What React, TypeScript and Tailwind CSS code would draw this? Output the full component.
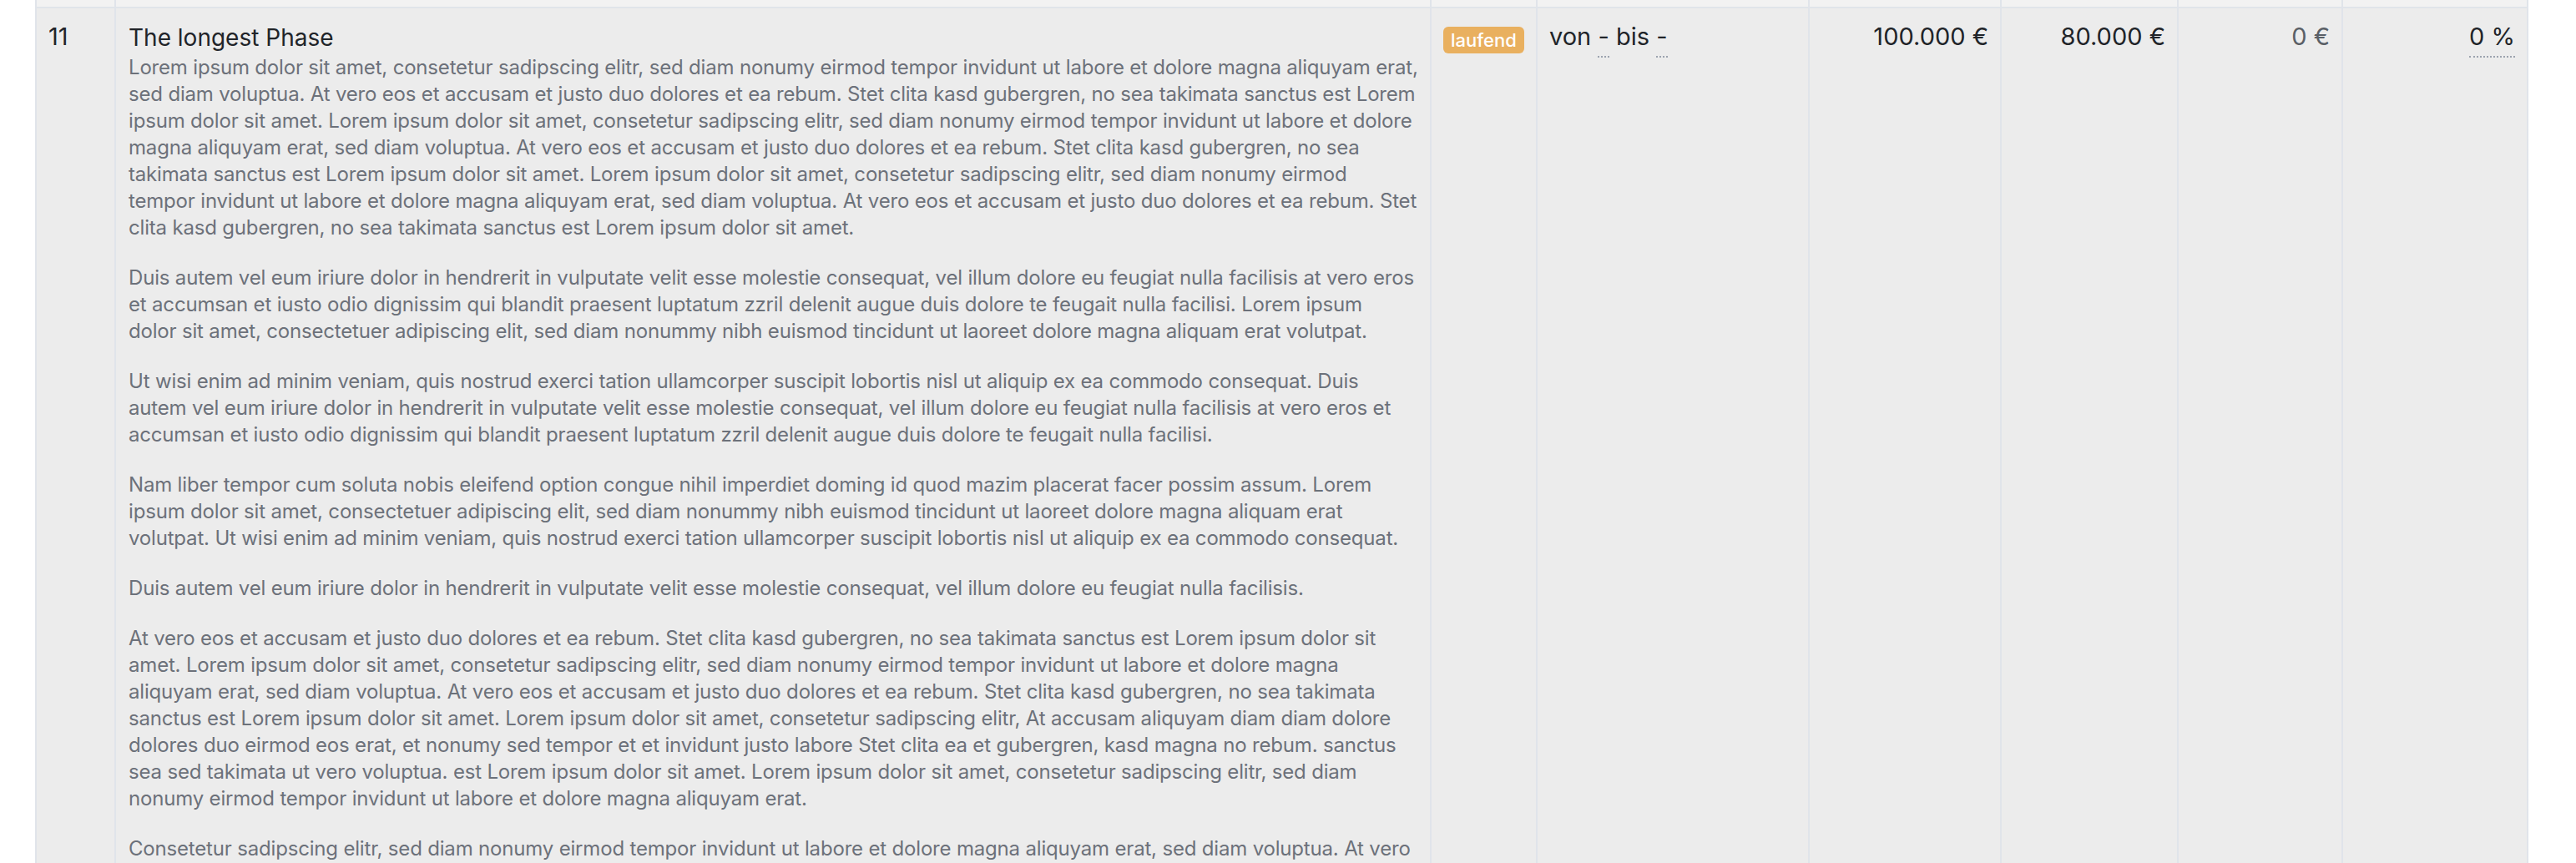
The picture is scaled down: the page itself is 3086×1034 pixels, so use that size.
import React from "react";

const paragraphs: string[][] = [
  [
    "Lorem ipsum dolor sit amet, consetetur sadipscing elitr, sed diam nonumy eirmod tempor invidunt ut labore et dolore magna aliquyam erat,",
    "sed diam voluptua. At vero eos et accusam et justo duo dolores et ea rebum. Stet clita kasd gubergren, no sea takimata sanctus est Lorem",
    "ipsum dolor sit amet. Lorem ipsum dolor sit amet, consetetur sadipscing elitr, sed diam nonumy eirmod tempor invidunt ut labore et dolore",
    "magna aliquyam erat, sed diam voluptua. At vero eos et accusam et justo duo dolores et ea rebum. Stet clita kasd gubergren, no sea",
    "takimata sanctus est Lorem ipsum dolor sit amet. Lorem ipsum dolor sit amet, consetetur sadipscing elitr, sed diam nonumy eirmod",
    "tempor invidunt ut labore et dolore magna aliquyam erat, sed diam voluptua. At vero eos et accusam et justo duo dolores et ea rebum. Stet",
    "clita kasd gubergren, no sea takimata sanctus est Lorem ipsum dolor sit amet.",
  ],
  [
    "Duis autem vel eum iriure dolor in hendrerit in vulputate velit esse molestie consequat, vel illum dolore eu feugiat nulla facilisis at vero eros",
    "et accumsan et iusto odio dignissim qui blandit praesent luptatum zzril delenit augue duis dolore te feugait nulla facilisi. Lorem ipsum",
    "dolor sit amet, consectetuer adipiscing elit, sed diam nonummy nibh euismod tincidunt ut laoreet dolore magna aliquam erat volutpat.",
  ],
  [
    "Ut wisi enim ad minim veniam, quis nostrud exerci tation ullamcorper suscipit lobortis nisl ut aliquip ex ea commodo consequat. Duis",
    "autem vel eum iriure dolor in hendrerit in vulputate velit esse molestie consequat, vel illum dolore eu feugiat nulla facilisis at vero eros et",
    "accumsan et iusto odio dignissim qui blandit praesent luptatum zzril delenit augue duis dolore te feugait nulla facilisi.",
  ],
  [
    "Nam liber tempor cum soluta nobis eleifend option congue nihil imperdiet doming id quod mazim placerat facer possim assum. Lorem",
    "ipsum dolor sit amet, consectetuer adipiscing elit, sed diam nonummy nibh euismod tincidunt ut laoreet dolore magna aliquam erat",
    "volutpat. Ut wisi enim ad minim veniam, quis nostrud exerci tation ullamcorper suscipit lobortis nisl ut aliquip ex ea commodo consequat.",
  ],
  [
    "Duis autem vel eum iriure dolor in hendrerit in vulputate velit esse molestie consequat, vel illum dolore eu feugiat nulla facilisis.",
  ],
  [
    "At vero eos et accusam et justo duo dolores et ea rebum. Stet clita kasd gubergren, no sea takimata sanctus est Lorem ipsum dolor sit",
    "amet. Lorem ipsum dolor sit amet, consetetur sadipscing elitr, sed diam nonumy eirmod tempor invidunt ut labore et dolore magna",
    "aliquyam erat, sed diam voluptua. At vero eos et accusam et justo duo dolores et ea rebum. Stet clita kasd gubergren, no sea takimata",
    "sanctus est Lorem ipsum dolor sit amet. Lorem ipsum dolor sit amet, consetetur sadipscing elitr, At accusam aliquyam diam diam dolore",
    "dolores duo eirmod eos erat, et nonumy sed tempor et et invidunt justo labore Stet clita ea et gubergren, kasd magna no rebum. sanctus",
    "sea sed takimata ut vero voluptua. est Lorem ipsum dolor sit amet. Lorem ipsum dolor sit amet, consetetur sadipscing elitr, sed diam",
    "nonumy eirmod tempor invidunt ut labore et dolore magna aliquyam erat.",
  ],
  [
    "Consetetur sadipscing elitr, sed diam nonumy eirmod tempor invidunt ut labore et dolore magna aliquyam erat, sed diam voluptua. At vero",
    "eos et accusam et justo duo dolores et ea rebum. Stet clita kasd gubergren, no sea takimata sanctus est Lorem ipsum dolor sit amet.",
  ],
];

const cols =
  "grid grid-cols-[95px_1576px_127px_326px_230px_212px_197px_222px] border-r-2 border-[#e0e4ea]";

export default function App() {
  return (
    <div className="w-[3086px] h-[1034px] overflow-hidden bg-white pl-[42px] font-[Inter,sans-serif]">
      <div className="w-[2987px]">
        {/* header strip */}
        <div className={`${cols} h-[10px] bg-[#f2f2f2] border-b-2`}>
          {Array.from({ length: 8 }).map((_, i) => (
            <div key={i} className="border-l-2 border-[#e0e4ea]" />
          ))}
        </div>
        {/* row */}
        <div className={`${cols} bg-[#ececec] min-h-[1100px]`}>
          <div className="border-l-2 border-[#e0e4ea] px-[14px] pt-[14px] text-[29px] leading-[40px] text-[#212429]">
            11
          </div>
          <div className="border-l-2 border-[#e0e4ea] px-[15px] pt-[15px]">
            <div className="text-[28px] leading-[40px] text-[#212429]">The longest Phase</div>
            <div className="text-[24px] leading-[32px] tracking-[-0.18px] text-[#6c717a] whitespace-nowrap">
              {paragraphs.map((p, i) => (
                <p key={i} className="mb-[28px]">
                  {p.map((line, j) => (
                    <React.Fragment key={j}>
                      {line}
                      {j < p.length - 1 && <br />}
                    </React.Fragment>
                  ))}
                </p>
              ))}
            </div>
          </div>
          <div className="border-l-2 border-[#e0e4ea] px-[14px] pt-[22px]">
            <span className="inline-flex items-center h-[32px] px-[9px] rounded-[6px] bg-[#e9b05f] text-white text-[22px] font-medium leading-none">
              laufend
            </span>
          </div>
          <div className="border-l-2 border-[#e0e4ea] px-[14px] pt-[14px] text-[29px] leading-[40px] text-[#212429] whitespace-nowrap">
            von <span className="border-b-2 border-dotted border-[#9ca3af] pb-[6px]">-</span> bis{" "}
            <span className="border-b-2 border-dotted border-[#9ca3af] pb-[6px]">-</span>
          </div>
          <div className="border-l-2 border-[#e0e4ea] px-[14px] pt-[14px] text-[29px] leading-[40px] text-[#212429] text-right">
            100.000 €
          </div>
          <div className="border-l-2 border-[#e0e4ea] px-[14px] pt-[14px] text-[29px] leading-[40px] text-[#212429] text-right">
            80.000 €
          </div>
          <div className="border-l-2 border-[#e0e4ea] px-[14px] pt-[14px] text-[29px] leading-[40px] text-[#5a5f66] text-right">
            0 €
          </div>
          <div className="border-l-2 border-[#e0e4ea] px-[14px] pt-[14px] text-[29px] leading-[40px] text-[#212429] text-right">
            <span className="border-b-2 border-dotted border-[#9ca3af] pb-[6px]">0 %</span>
          </div>
        </div>
      </div>
    </div>
  );
}
